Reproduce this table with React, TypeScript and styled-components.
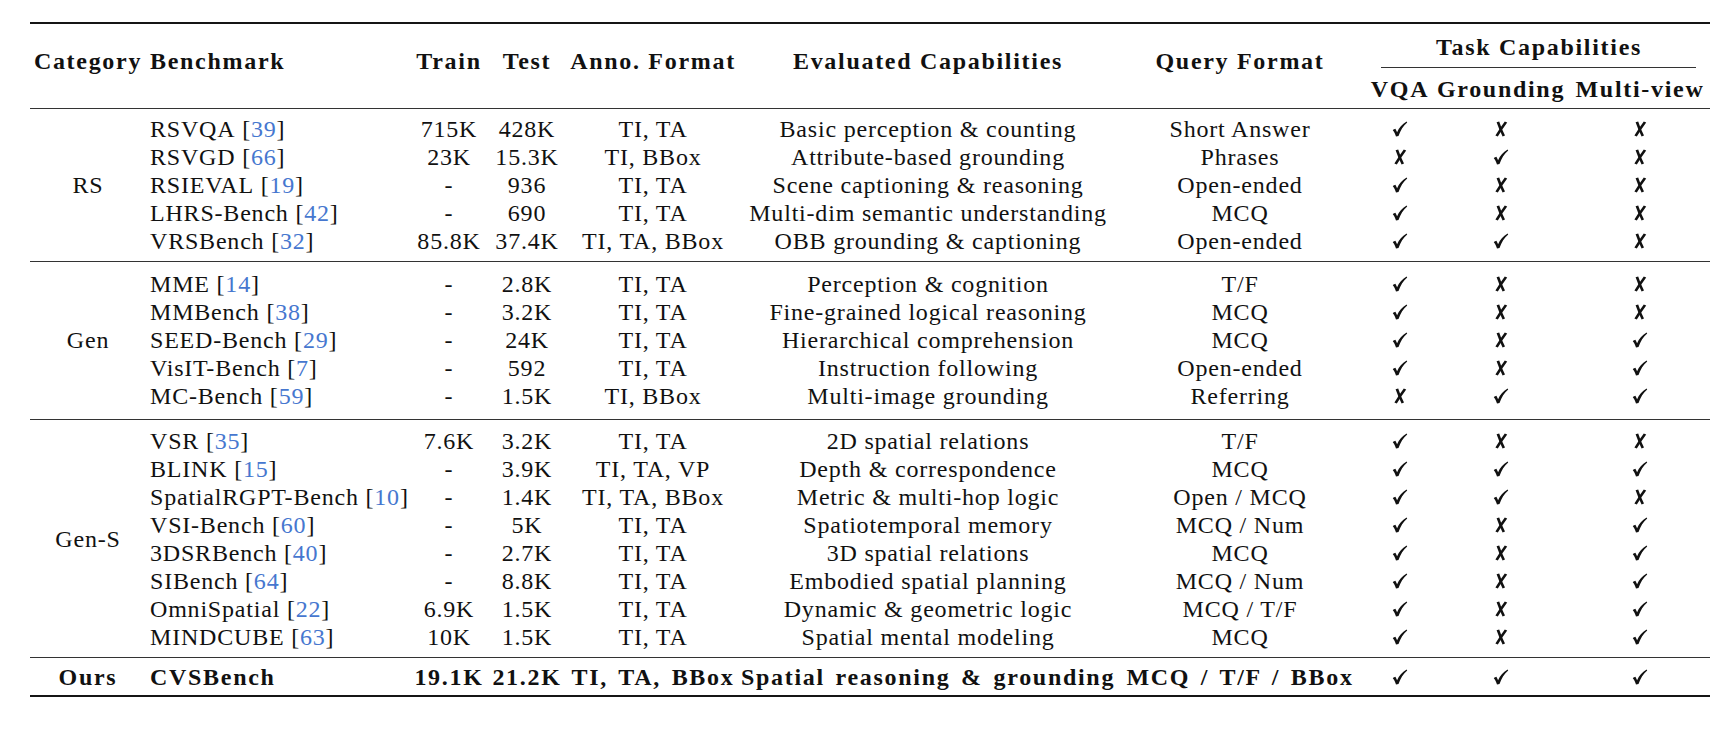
import React from "react";
import styled, { createGlobalStyle, css } from "styled-components";

const GlobalStyle = createGlobalStyle`
  html, body { margin: 0; padding: 0; background: #ffffff; }
  body {
    font-family: "Liberation Serif", "Times New Roman", serif;
    color: #111111;
    font-size: 24px;
    letter-spacing: 0.8px;
  }
`;

const COLS = "264px 78px 78px 7px 160px 27px 336px 14px 260px 60px 142px 136px 2px";
const AREAS = `"bench train test . anno . eval . query vqa ground mv ."`;

type Area = "bench" | "train" | "test" | "anno" | "eval" | "query" | "vqa" | "ground" | "mv" | "task";

const Page = styled.div`
  padding: 22px 0 0 30px;
`;

const Table = styled.div`
  width: 1680px;
  border-top: 2px solid #151515;
  border-bottom: 2px solid #151515;
`;

const Header = styled.div`
  display: flex;
  height: 84px;
  border-bottom: 1px solid #333333;
  font-weight: 700;
  letter-spacing: 1.7px;
`;

const HeaderCat = styled.div`
  width: 116px;
  display: flex;
  justify-content: center;
  padding-top: 23px;
  line-height: 28px;
  white-space: nowrap;
`;

const HeaderGrid = styled.div`
  display: grid;
  grid-template-columns: ${COLS};
  grid-template-rows: 44px 40px;
  grid-template-areas:
    "bench train test . anno . eval . query task task task ."
    "bench train test . anno . eval . query vqa ground mv .";
`;

const HeadCell = styled.div<{ $area: Area; $left?: boolean }>`
  grid-area: ${(p) => p.$area};
  display: flex;
  justify-content: ${(p) => (p.$left ? "flex-start" : "center")};
  padding-left: ${(p) => (p.$left ? "4px" : "0")};
  padding-top: 23px;
  line-height: 28px;
  white-space: nowrap;
`;

const SubHead = styled.div<{ $area: Area }>`
  grid-area: ${(p) => p.$area};
  display: flex;
  justify-content: center;
  align-items: center;
  padding-top: 2px;
  line-height: 28px;
  white-space: nowrap;
`;

const TaskHead = styled.div`
  grid-area: task;
  display: flex;
  flex-direction: column;
  justify-content: flex-end;
  align-items: stretch;
`;

const TaskLabel = styled.div`
  text-align: center;
  line-height: 28px;
  margin-bottom: 6px;
  white-space: nowrap;
`;

const CmidRule = styled.div`
  height: 1px;
  background: #333333;
  margin: 0 12px 0 11px;
`;

const Group = styled.div<{ $bold?: boolean; $last?: boolean; $padTop: number; $padBottom: number }>`
  display: flex;
  padding-top: ${(p) => p.$padTop}px;
  padding-bottom: ${(p) => p.$padBottom}px;
  border-bottom: ${(p) => (p.$last ? "none" : "1px solid #333333")};
  ${(p) =>
    p.$bold &&
    css`
      font-weight: 700;
      letter-spacing: 1.7px;
    `}
`;

const GroupLabel = styled.div`
  width: 116px;
  display: flex;
  align-items: center;
  justify-content: center;
  white-space: nowrap;
`;

const Rows = styled.div`
  display: flex;
  flex-direction: column;
`;

const Row = styled.div<{ $wideWords?: boolean }>`
  display: grid;
  grid-template-columns: ${COLS};
  grid-template-areas: ${AREAS};
  height: 28px;
  line-height: 28px;
  word-spacing: ${(p) => (p.$wideWords ? "3px" : "0")};
`;

const Cell = styled.div<{ $area: Area; $left?: boolean }>`
  grid-area: ${(p) => p.$area};
  display: flex;
  align-items: center;
  justify-content: ${(p) => (p.$left ? "flex-start" : "center")};
  padding-left: ${(p) => (p.$left ? "4px" : "0")};
  white-space: nowrap;
`;

const Cite = styled.span`
  color: #4677cf;
`;

const MarkSvg = styled.svg`
  display: block;
  width: 16px;
  height: 16px;
  margin-top: -1px;
`;

const CheckMark: React.FC = () => (
  <MarkSvg viewBox="0 0 16 16" aria-label="yes">
    <path
      d="M0.8 9.2 C1.8 8.3 2.6 7.9 3.4 7.8 C4.0 8.8 4.6 10.0 5.1 11.2 C7.0 7.0 10.0 3.3 14.6 0.6 L15.2 1.4 C11.2 4.8 8.6 9.0 6.5 15.0 C5.7 15.3 4.8 15.5 4.0 15.6 C3.2 13.0 2.2 10.8 0.8 9.2 Z"
      fill="#111111"
    />
  </MarkSvg>
);

const CrossMark: React.FC = () => (
  <MarkSvg viewBox="0 0 16 16" aria-label="no">
    <path d="M3.6 1.2 L6.2 0.5 C7.7 5.3 9.6 10.0 12.0 14.6 L9.6 15.5 C7.3 11.0 5.3 6.2 3.6 1.2 Z" fill="#111111" />
    <path d="M11.8 0.5 L14.2 1.4 C11.0 5.8 7.9 10.4 4.8 15.5 L2.4 14.6 C5.4 9.6 8.5 4.9 11.8 0.5 Z" fill="#111111" />
  </MarkSvg>
);

type Entry = {
  name: string;
  cite?: string;
  train: string;
  test: string;
  anno: string;
  evalCap: string;
  query: string;
  marks: [boolean, boolean, boolean];
};

type GroupData = { label: string; padTop: number; padBottom: number; rows: Entry[] };

const groups: GroupData[] = [
  {
    label: "RS",
    padTop: 6,
    padBottom: 6,
    rows: [
      { name: "RSVQA", cite: "39", train: "715K", test: "428K", anno: "TI, TA", evalCap: "Basic perception & counting", query: "Short Answer", marks: [true, false, false] },
      { name: "RSVGD", cite: "66", train: "23K", test: "15.3K", anno: "TI, BBox", evalCap: "Attribute-based grounding", query: "Phrases", marks: [false, true, false] },
      { name: "RSIEVAL", cite: "19", train: "-", test: "936", anno: "TI, TA", evalCap: "Scene captioning & reasoning", query: "Open-ended", marks: [true, false, false] },
      { name: "LHRS-Bench", cite: "42", train: "-", test: "690", anno: "TI, TA", evalCap: "Multi-dim semantic understanding", query: "MCQ", marks: [true, false, false] },
      { name: "VRSBench", cite: "32", train: "85.8K", test: "37.4K", anno: "TI, TA, BBox", evalCap: "OBB grounding & captioning", query: "Open-ended", marks: [true, true, false] },
    ],
  },
  {
    label: "Gen",
    padTop: 8,
    padBottom: 9,
    rows: [
      { name: "MME", cite: "14", train: "-", test: "2.8K", anno: "TI, TA", evalCap: "Perception & cognition", query: "T/F", marks: [true, false, false] },
      { name: "MMBench", cite: "38", train: "-", test: "3.2K", anno: "TI, TA", evalCap: "Fine-grained logical reasoning", query: "MCQ", marks: [true, false, false] },
      { name: "SEED-Bench", cite: "29", train: "-", test: "24K", anno: "TI, TA", evalCap: "Hierarchical comprehension", query: "MCQ", marks: [true, false, true] },
      { name: "VisIT-Bench", cite: "7", train: "-", test: "592", anno: "TI, TA", evalCap: "Instruction following", query: "Open-ended", marks: [true, false, true] },
      { name: "MC-Bench", cite: "59", train: "-", test: "1.5K", anno: "TI, BBox", evalCap: "Multi-image grounding", query: "Referring", marks: [false, true, true] },
    ],
  },
  {
    label: "Gen-S",
    padTop: 7,
    padBottom: 6,
    rows: [
      { name: "VSR", cite: "35", train: "7.6K", test: "3.2K", anno: "TI, TA", evalCap: "2D spatial relations", query: "T/F", marks: [true, false, false] },
      { name: "BLINK", cite: "15", train: "-", test: "3.9K", anno: "TI, TA, VP", evalCap: "Depth & correspondence", query: "MCQ", marks: [true, true, true] },
      { name: "SpatialRGPT-Bench", cite: "10", train: "-", test: "1.4K", anno: "TI, TA, BBox", evalCap: "Metric & multi-hop logic", query: "Open / MCQ", marks: [true, true, false] },
      { name: "VSI-Bench", cite: "60", train: "-", test: "5K", anno: "TI, TA", evalCap: "Spatiotemporal memory", query: "MCQ / Num", marks: [true, false, true] },
      { name: "3DSRBench", cite: "40", train: "-", test: "2.7K", anno: "TI, TA", evalCap: "3D spatial relations", query: "MCQ", marks: [true, false, true] },
      { name: "SIBench", cite: "64", train: "-", test: "8.8K", anno: "TI, TA", evalCap: "Embodied spatial planning", query: "MCQ / Num", marks: [true, false, true] },
      { name: "OmniSpatial", cite: "22", train: "6.9K", test: "1.5K", anno: "TI, TA", evalCap: "Dynamic & geometric logic", query: "MCQ / T/F", marks: [true, false, true] },
      { name: "MINDCUBE", cite: "63", train: "10K", test: "1.5K", anno: "TI, TA", evalCap: "Spatial mental modeling", query: "MCQ", marks: [true, false, true] },
    ],
  },
];

const ours: GroupData = {
  label: "Ours",
  padTop: 5,
  padBottom: 4,
  rows: [
    { name: "CVSBench", train: "19.1K", test: "21.2K", anno: "TI, TA, BBox", evalCap: "Spatial reasoning & grounding", query: "MCQ / T/F / BBox", marks: [true, true, true] },
  ],
};

const markAreas: Area[] = ["vqa", "ground", "mv"];

const DataRow: React.FC<{ e: Entry; wide?: boolean }> = ({ e, wide }) => (
  <Row $wideWords={wide}>
    <Cell $area="bench" $left>
      {e.name}
      {e.cite && (
        <>
          &nbsp;[<Cite>{e.cite}</Cite>]
        </>
      )}
    </Cell>
    <Cell $area="train">{e.train}</Cell>
    <Cell $area="test">{e.test}</Cell>
    <Cell $area="anno">{e.anno}</Cell>
    <Cell $area="eval">{e.evalCap}</Cell>
    <Cell $area="query">{e.query}</Cell>
    {e.marks.map((m, i) => (
      <Cell key={markAreas[i]} $area={markAreas[i]}>
        {m ? <CheckMark /> : <CrossMark />}
      </Cell>
    ))}
  </Row>
);

const GroupBlock: React.FC<{ g: GroupData; bold?: boolean; last?: boolean }> = ({ g, bold, last }) => (
  <Group $bold={bold} $last={last} $padTop={g.padTop} $padBottom={g.padBottom}>
    <GroupLabel>{g.label}</GroupLabel>
    <Rows>
      {g.rows.map((e) => (
        <DataRow key={e.name} e={e} wide={bold} />
      ))}
    </Rows>
  </Group>
);

export default function App() {
  return (
    <>
      <GlobalStyle />
      <Page>
        <Table>
          <Header>
            <HeaderCat>Category</HeaderCat>
            <HeaderGrid>
              <HeadCell $area="bench" $left>Benchmark</HeadCell>
              <HeadCell $area="train">Train</HeadCell>
              <HeadCell $area="test">Test</HeadCell>
              <HeadCell $area="anno">Anno. Format</HeadCell>
              <HeadCell $area="eval">Evaluated Capabilities</HeadCell>
              <HeadCell $area="query">Query Format</HeadCell>
              <TaskHead>
                <TaskLabel>Task Capabilities</TaskLabel>
                <CmidRule />
              </TaskHead>
              <SubHead $area="vqa">VQA</SubHead>
              <SubHead $area="ground">Grounding</SubHead>
              <SubHead $area="mv">Multi-view</SubHead>
            </HeaderGrid>
          </Header>
          {groups.map((g) => (
            <GroupBlock key={g.label} g={g} />
          ))}
          <GroupBlock g={ours} bold last />
        </Table>
      </Page>
    </>
  );
}
